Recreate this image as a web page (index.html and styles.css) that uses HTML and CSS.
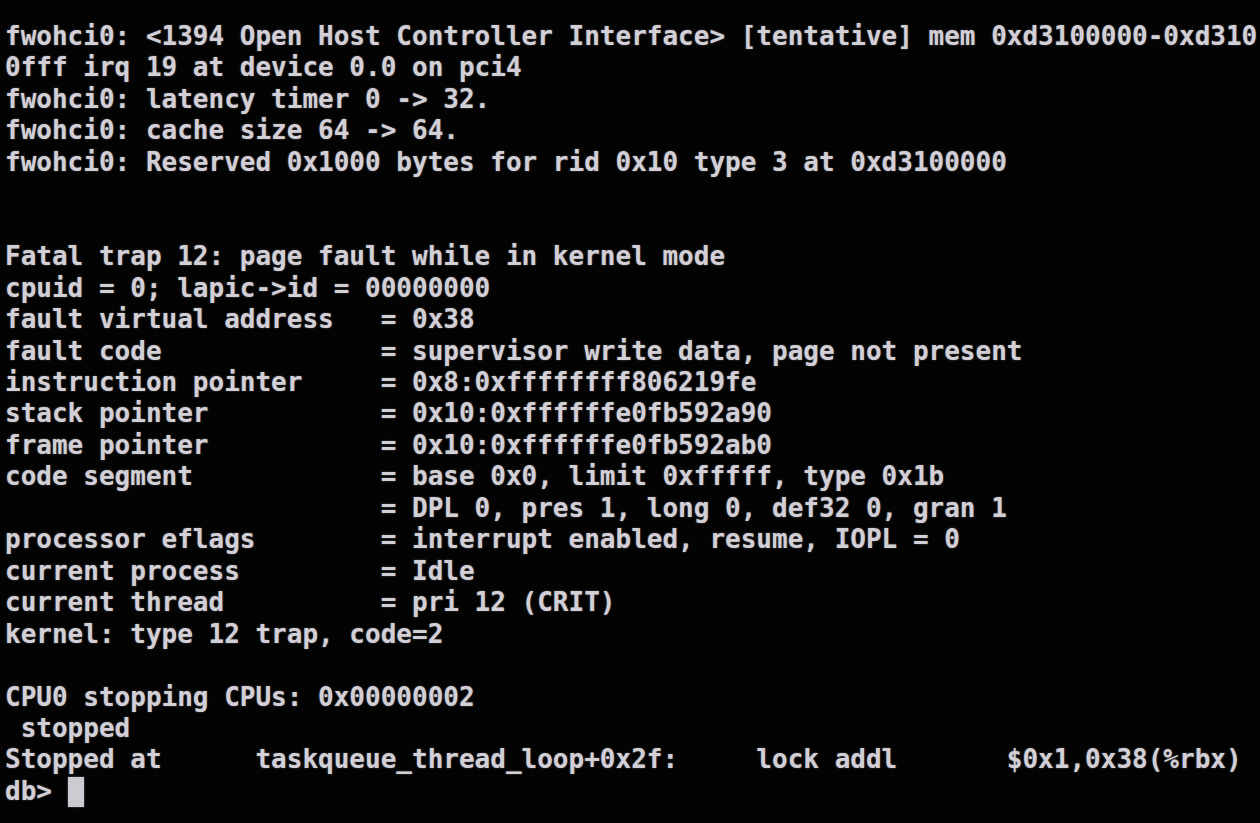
FILE: index.html
```html
<html>
    <head>
        <title>
            db console
        </title>
        <link rel="stylesheet" href="styles.css">
    </head>
    <body>
<pre class="console">fwohci0: &lt;1394 Open Host Controller Interface&gt; [tentative] mem 0xd3100000-0xd310
0fff irq 19 at device 0.0 on pci4
fwohci0: latency timer 0 -&gt; 32.
fwohci0: cache size 64 -&gt; 64.
fwohci0: Reserved 0x1000 bytes for rid 0x10 type 3 at 0xd3100000


Fatal trap 12: page fault while in kernel mode
cpuid = 0; lapic-&gt;id = 00000000
fault virtual address   = 0x38
fault code              = supervisor write data, page not present
instruction pointer     = 0x8:0xffffffff806219fe
stack pointer           = 0x10:0xffffffe0fb592a90
frame pointer           = 0x10:0xffffffe0fb592ab0
code segment            = base 0x0, limit 0xfffff, type 0x1b
                        = DPL 0, pres 1, long 0, def32 0, gran 1
processor eflags        = interrupt enabled, resume, IOPL = 0
current process         = Idle
current thread          = pri 12 (CRIT)
kernel: type 12 trap, code=2

CPU0 stopping CPUs: 0x00000002
 stopped
Stopped at      taskqueue_thread_loop+0x2f:     lock addl       $0x1,0x38(%rbx)
db&gt; <span class="cursor"></span></pre>
    </body>
</html>
```

FILE: styles.css
```css
body {
    margin: 0 0 0 0;
    background-color: #030303;
    overflow: hidden;
}
.console {
    margin: 0;
    padding: 21px 0 0 5px;
    font-family: "DejaVu Sans Mono", monospace;
    font-weight: bold;
    font-size: 26px;
    line-height: 31.45px;
    color: #d2cfd6;
    text-shadow: 0 0 2px rgba(210, 207, 214, 0.45);
    white-space: pre;
}
.cursor {
    display: inline-block;
    width: 16px;
    height: 30px;
    vertical-align: top;
    margin-top: 1px;
    background-color: #cdcad1;
    box-shadow: 0 0 2px rgba(210, 207, 214, 0.5);
}
```
